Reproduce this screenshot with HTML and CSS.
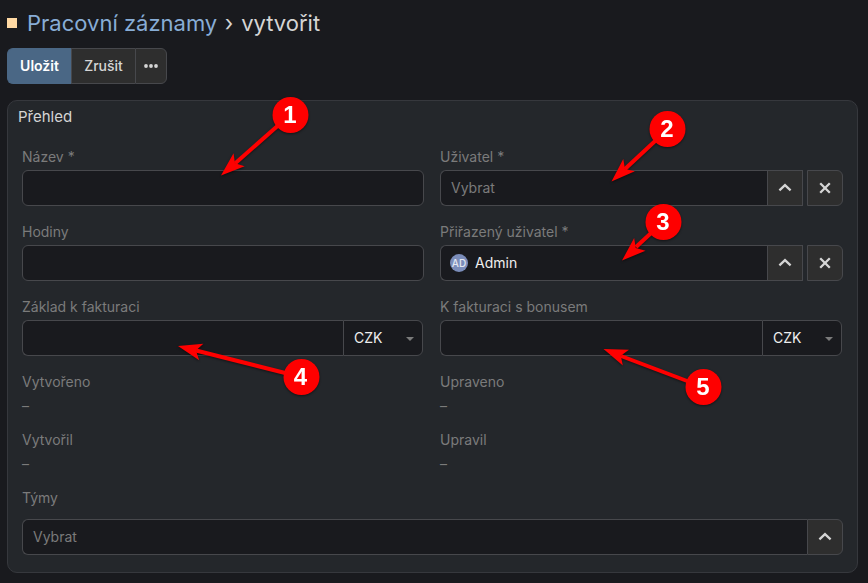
FILE: index.html
```
<!DOCTYPE html>
<html lang="cs">
<head>
    <meta charset="UTF-8">
    <meta name="viewport" content="width=device-width, initial-scale=1.0">
    <title>Pracovní záznamy › vytvořit</title>
    <link rel="stylesheet" href="styles.css">
</head>
<body>

<svg class="symbols" width="0" height="0">
    <symbol id="chevron" viewBox="0 0 14 14">
        <path d="M1.4 9.4 L7 4.1 L12.6 9.4" fill="none" stroke="currentColor" stroke-width="2.3"/>
    </symbol>
    <symbol id="cross" viewBox="0 0 14 14">
        <path d="M2.2 2.2 L11.8 11.8 M11.8 2.2 L2.2 11.8" fill="none" stroke="currentColor" stroke-width="2.3"/>
    </symbol>
</svg>

<h1 class="page-title">
    <span class="color-icon"></span>
    <a href="#">Pracovní záznamy</a>
    <span class="separator">›</span>
    <span>vytvořit</span>
</h1>

<div class="btn-group">
    <button class="btn btn-primary">Uložit</button>
    <button class="btn">Zrušit</button>
    <button class="btn btn-more" aria-label="Více">
        <svg width="14" height="4" viewBox="0 0 14 4"><circle cx="2" cy="2" r="1.9"/><circle cx="7" cy="2" r="1.9"/><circle cx="12" cy="2" r="1.9"/></svg>
    </button>
</div>

<div class="panel">
    <h4 class="panel-title">Přehled</h4>
    <div class="fields">
        <div class="cell">
            <label>Název *</label>
            <div class="control"></div>
        </div>
        <div class="cell">
            <label>Uživatel *</label>
            <div class="input-row">
                <div class="control control-link"><span class="placeholder">Vybrat</span></div>
                <button class="icon-btn"><svg><use href="#chevron"/></svg></button>
                <button class="icon-btn icon-btn-clear"><svg><use href="#cross"/></svg></button>
            </div>
        </div>

        <div class="cell">
            <label>Hodiny</label>
            <div class="control"></div>
        </div>
        <div class="cell">
            <label>Přiřazený uživatel *</label>
            <div class="input-row">
                <div class="control control-link"><span class="avatar">AD</span><span>Admin</span></div>
                <button class="icon-btn"><svg><use href="#chevron"/></svg></button>
                <button class="icon-btn icon-btn-clear"><svg><use href="#cross"/></svg></button>
            </div>
        </div>

        <div class="cell">
            <label>Základ k fakturaci</label>
            <div class="input-row input-currency">
                <div class="control control-link"></div>
                <div class="currency"><span>CZK</span><span class="caret"></span></div>
            </div>
        </div>
        <div class="cell">
            <label>K fakturaci s bonusem</label>
            <div class="input-row input-currency">
                <div class="control control-link"></div>
                <div class="currency"><span>CZK</span><span class="caret"></span></div>
            </div>
        </div>

        <div class="cell">
            <label>Vytvořeno</label>
            <div class="value">–</div>
        </div>
        <div class="cell">
            <label>Upraveno</label>
            <div class="value">–</div>
        </div>

        <div class="cell">
            <label>Vytvořil</label>
            <div class="value">–</div>
        </div>
        <div class="cell">
            <label>Upravil</label>
            <div class="value">–</div>
        </div>

        <div class="cell cell-full">
            <label>Týmy</label>
            <div class="input-row">
                <div class="control control-link"><span class="placeholder">Vybrat</span></div>
                <button class="icon-btn icon-btn-last"><svg><use href="#chevron"/></svg></button>
            </div>
        </div>
    </div>
</div>

<!-- numbered callouts over the form -->
<svg class="callouts" width="868" height="583" viewBox="0 0 868 583">
    <defs>
        <path id="head" d="M0 0 L-24 8.5 L-18.5 0 L-24 -8.5 Z"/>
    </defs>
    <g class="arrows">
        <line x1="290" y1="115" x2="235" y2="163.5"/>
        <use href="#head" transform="translate(221 175.5) rotate(139)"/>
        <line x1="668" y1="129" x2="625" y2="169"/>
        <use href="#head" transform="translate(611.5 181.5) rotate(137)"/>
        <line x1="663" y1="222" x2="636" y2="247"/>
        <use href="#head" transform="translate(622 260.5) rotate(138)"/>
        <line x1="301" y1="377" x2="196" y2="350.5"/>
        <use href="#head" transform="translate(178 346) rotate(194.2)"/>
        <line x1="703" y1="387" x2="621" y2="356"/>
        <use href="#head" transform="translate(603.5 349) rotate(201)"/>
    </g>
    <g class="badges">
        <circle cx="290.5" cy="115" r="18"/>
        <circle cx="667.5" cy="129" r="18"/>
        <circle cx="663.5" cy="222" r="18"/>
        <circle cx="301.5" cy="377" r="18"/>
        <circle cx="703.5" cy="387" r="18"/>
    </g>
    <g class="numbers">
        <text x="290" y="123">1</text>
        <text x="667" y="137">2</text>
        <text x="663" y="230">3</text>
        <text x="300.5" y="385">4</text>
        <text x="703" y="395">5</text>
    </g>
</svg>

</body>
</html>
```
FILE: styles.css
```
* {
    box-sizing: border-box;
}

body {
    margin: 0;
    padding: 8px 10px 10px 7px;
    height: 583px;
    overflow: hidden;
    background: #191a1e;
    color: #d5d5d5;
    font-family: Inter, "Liberation Sans", sans-serif;
    font-size: 14px;
    line-height: 20px;
}

.symbols {
    position: absolute;
}

.page-title {
    display: flex;
    align-items: center;
    height: 30px;
    margin: 0 0 10px;
    font-size: 22px;
    font-weight: 400;
    line-height: 30px;
}

.page-title a {
    color: #88add6;
    text-decoration: none;
}

.color-icon {
    width: 10px;
    height: 10px;
    margin-right: 10px;
    background: #ffd9a4;
}

.separator {
    margin: 0 8px 0 7.5px;
}

.btn-group {
    display: flex;
    height: 36px;
    margin-bottom: 16px;
}

.btn {
    display: flex;
    align-items: center;
    justify-content: center;
    width: 64px;
    padding: 0;
    border: 1px solid #47484c;
    border-right: 0;
    background: #2e2e2e;
    color: #d5d5d5;
    font: 500 14px/20px Inter, "Liberation Sans", sans-serif;
}

.btn-primary {
    border-color: #4a6785;
    border-radius: 6px 0 0 6px;
    background: #4a6785;
    color: #fff;
    font-weight: 600;
}

.btn-more {
    width: 32px;
    border-right: 1px solid #47484c;
    border-radius: 0 6px 6px 0;
    fill: currentColor;
}

.panel {
    height: 473px;
    padding: 6px 14px 0;
    border: 1px solid #36383d;
    border-radius: 10px;
    background: #24272b;
}

.panel-title {
    margin: 0 0 20px -4px;
    font-size: 15px;
    font-weight: 400;
    line-height: 20px;
}

.fields {
    display: grid;
    grid-template-columns: 402px 403px;
    column-gap: 16px;
    row-gap: 16px;
}

.cell label {
    display: block;
    margin-bottom: 3px;
    color: #7b7b7b;
}

.cell-full {
    grid-column: 1 / 3;
}

.cell-full label {
    margin-bottom: 11px;
}

.control {
    display: flex;
    align-items: center;
    height: 36px;
    padding: 0 10px;
    border: 1px solid #47484c;
    border-radius: 6px;
    background: #191a1e;
    color: #eee;
}

.control-link {
    flex: 1;
    border-right: 0;
    border-radius: 6px 0 0 6px;
}

.placeholder {
    color: #7b7b7b;
}

.value {
    height: 19px;
    color: #7b7b7b;
    line-height: 22px;
}

.input-row {
    display: flex;
}

.icon-btn {
    display: flex;
    align-items: center;
    justify-content: center;
    width: 36px;
    height: 36px;
    padding: 0;
    border: 1px solid #47484c;
    background: #2e2e2e;
    color: #d5d5d5;
}

.icon-btn svg {
    width: 14px;
    height: 14px;
}

.icon-btn-clear {
    margin-left: 4px;
    border-radius: 0 6px 6px 0;
}

.icon-btn-last {
    border-radius: 0 6px 6px 0;
}

.avatar {
    width: 18px;
    height: 18px;
    margin: 0 7px 0 -1px;
    border-radius: 50%;
    background: #7b8dba;
    color: #e4e8f2;
    font-size: 10px;
    font-weight: 500;
    line-height: 18px;
    text-align: center;
}

.input-currency {
    margin-right: 1px;
}

.currency {
    display: flex;
    align-items: center;
    justify-content: space-between;
    width: 80px;
    height: 36px;
    padding: 0 8px 0 10px;
    border: 1px solid #47484c;
    border-radius: 0 6px 6px 0;
    background: #191a1e;
    color: #eee;
}

.caret {
    margin-top: 2px;
    border: 4px solid transparent;
    border-top-color: #7b7b7b;
    border-bottom: 0;
}

.callouts {
    position: absolute;
    top: 0;
    left: 0;
    filter: drop-shadow(0 1px 1px rgba(0, 0, 0, 0.5));
}

.arrows line {
    stroke: #fe0000;
    stroke-width: 4;
}

.arrows use,
.badges circle {
    fill: #fe0000;
}

.numbers text {
    fill: #fff;
    font-size: 24px;
    font-weight: 700;
    text-anchor: middle;
    font-family: "Liberation Sans", sans-serif;
}
```
